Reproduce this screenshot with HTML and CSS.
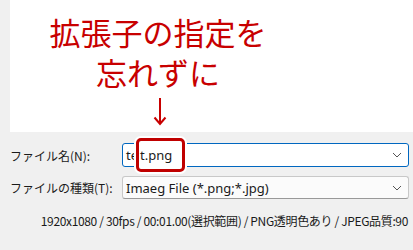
FILE: index.html
```html
<!DOCTYPE html>
<html lang="ja">
<head>
    <meta charset="UTF-8">
    <title>保存ダイアログ</title>
    <link rel="stylesheet" href="styles.css">
</head>
<body>

    <!-- Preview area with annotation -->
    <div class="preview">
        <div class="note">
            <p class="note-text">拡張子の指定を<br>忘れずに</p>
            <svg class="arrow" width="14" height="30" viewBox="0 0 14 30">
                <line x1="7" y1="1" x2="7" y2="27" stroke="#c80000" stroke-width="2"/>
                <polyline points="1.5,20.5 7,27 12.5,20.5" fill="none" stroke="#c80000" stroke-width="2"/>
            </svg>
        </div>
    </div>

    <!-- File fields -->
    <div class="fields">
        <label class="field-label">ファイル名(N):</label>
        <div class="combo focused">
            <span class="combo-text">te</span>
            <div class="highlight"><span>t.png</span></div>
            <svg class="chevron" width="10" height="6" viewBox="0 0 10 6">
                <polyline points="1,1 5,5 9,1" fill="none" stroke="#555" stroke-width="1"/>
            </svg>
        </div>

        <label class="field-label">ファイルの種類(T):</label>
        <div class="combo">
            <span class="combo-text">Imaeg File (*.png;*.jpg)</span>
            <svg class="chevron" width="10" height="6" viewBox="0 0 10 6">
                <polyline points="1,1 5,5 9,1" fill="none" stroke="#555" stroke-width="1"/>
            </svg>
        </div>
    </div>

    <div class="status">1920x1080 / 30fps / 00:01.00(選択範囲) / PNG透明色あり / JPEG品質:90</div>

</body>
</html>
```

FILE: styles.css
```css
body {
    margin: 0;
    background-color: #f0f0f0;
    font-family: "Segoe UI", "Noto Sans CJK JP", "Noto Sans", sans-serif;
    font-size: 12px;
    color: #1a1a1a;
    width: 413px;
    height: 250px;
    overflow: hidden;
}
.preview {
    margin-left: 10px;
    height: 132px;
    background: white;
}
.note {
    width: 296px;
    padding-top: 12px;
    display: flex;
    flex-direction: column;
    align-items: center;
}
.note-text {
    margin: 0;
    text-align: center;
    color: #c80000;
    font-family: "Noto Sans CJK JP", sans-serif;
    font-size: 31px;
    line-height: 40px;
}
.arrow {
    margin-top: 5px;
    margin-left: 4px;
}

/* Fields */
.fields {
    display: grid;
    grid-template-columns: 112px 287px;
    row-gap: 9px;
    padding: 11px 0 0 10px;
    align-items: center;
}
.field-label {
    font-family: "Noto Sans CJK JP", sans-serif;
    font-size: 12px;
}
.combo {
    position: relative;
    height: 21px;
    border: 1px solid #c8c8c8;
    border-bottom-color: #999;
    border-radius: 3px;
    background: #fbfbfb;
    display: flex;
    align-items: center;
    padding-left: 3px;
}
.combo.focused {
    border-color: #0067c0;
    background: white;
    height: 22px;
}
.combo-text {
    flex: 1;
    font-family: "Segoe UI", "Noto Sans", sans-serif;
    font-size: 13px;
}
.chevron {
    margin-right: 6px;
}
.highlight {
    position: absolute;
    left: 13px;
    top: -6px;
    width: 42px;
    height: 28px;
    border: 3px solid #c00000;
    border-radius: 5px;
    background: white;
    box-shadow: 0 0 0 2px white;
    display: flex;
    align-items: center;
    padding-left: 1px;
    font-family: "Segoe UI", "Noto Sans", sans-serif;
    font-size: 13px;
}

.status {
    text-align: right;
    padding: 13px 5px 0 0;
    font-family: "Segoe UI", "Noto Sans CJK JP", sans-serif;
    font-size: 12px;
    letter-spacing: -0.35px;
}
```
